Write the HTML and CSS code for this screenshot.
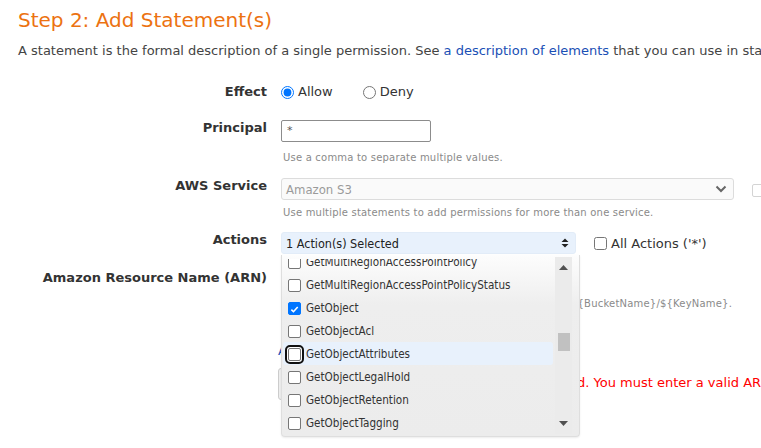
FILE: index.html
```html
<!DOCTYPE html>
<html>
<head>
<meta charset="utf-8">
<link rel="stylesheet" href="styles.css">
</head>
<body>
<div class="page">
  <h2 class="title">Step 2: Add Statement(s)</h2>
  <p class="intro">A statement is the formal description of a single permission. See <a href="#" class="link">a description of elements</a> that you can use in statements.</p>

  <div class="form">
    <div class="row row-effect">
      <div class="label">Effect</div>
      <div class="field radios">
        <label class="opt"><input type="radio" name="effect" checked> Allow</label>
        <label class="opt"><input type="radio" name="effect"> Deny</label>
      </div>
    </div>

    <div class="row row-principal">
      <div class="label">Principal</div>
      <div class="field">
        <div class="textbox">*</div>
        <div class="hint hint-principal">Use a comma to separate multiple values.</div>
      </div>
    </div>

    <div class="row row-service">
      <div class="label">AWS Service</div>
      <div class="field">
        <div class="service-line">
          <div class="select service-select">
            <span>Amazon S3</span>
            <svg class="chev" width="12" height="8" viewBox="0 0 12 8"><path d="M1.5 1.5 L6 6 L10.5 1.5" fill="none" stroke="#666" stroke-width="2"/></svg>
          </div>
          <span class="ghost-check"></span>
        </div>
        <div class="hint hint-service">Use multiple statements to add permissions for more than one service.</div>
      </div>
    </div>

    <div class="row row-actions">
      <div class="label">Actions</div>
      <div class="field actions-line">
        <div class="select actions-select">
          <span>1 Action(s) Selected</span>
          <svg class="updown" width="8" height="10" viewBox="0 0 8 10"><path d="M4 0.5 L7.5 4 H0.5 Z M4 9.5 L7.5 6 H0.5 Z" fill="#222"/></svg>
        </div>
        <label class="opt all"><input type="checkbox"> All Actions ('*')</label>
      </div>
    </div>

    <div class="row row-arn">
      <div class="label">Amazon Resource Name (ARN)</div>
      <div class="field">
        <div class="textbox arn-box"></div>
        <div class="hint hint-arn">ARN should follow the following format: arn:aws:s3:::${BucketName}/${KeyName}.</div>
        <div class="cond"><a href="#" class="link">Add Conditions (Optional)</a></div>
        <div class="submit-line">
          <button class="btn">Add Statement</button>
          <span class="error">Required field. You must enter a valid ARN.</span>
        </div>
      </div>
    </div>

    <div class="dropdown">
      <div class="dd-list">
        <div class="dd-items">
          <div class="item"><span class="cb"></span>GetMultiRegionAccessPointPolicy</div>
          <div class="item"><span class="cb"></span>GetMultiRegionAccessPointPolicyStatus</div>
          <div class="item"><span class="cb checked"><svg width="13" height="13" viewBox="0 0 13 13"><path d="M2.8 6.6 L5.3 9.1 L10.3 3.6" fill="none" stroke="#fff" stroke-width="1.9"/></svg></span>GetObject</div>
          <div class="item"><span class="cb"></span>GetObjectAcl</div>
          <div class="item hl"><span class="cb focus"></span>GetObjectAttributes</div>
          <div class="item"><span class="cb"></span>GetObjectLegalHold</div>
          <div class="item"><span class="cb"></span>GetObjectRetention</div>
          <div class="item"><span class="cb"></span>GetObjectTagging</div>
        </div>
      </div>
      <div class="scrollbar">
        <svg class="arr" width="9" height="5" viewBox="0 0 9 5"><path d="M4.5 0 L9 5 H0 Z" fill="#505050"/></svg>
        <div class="track"><div class="thumb"></div></div>
        <svg class="arr" width="9" height="5" viewBox="0 0 9 5"><path d="M0 0 H9 L4.5 5 Z" fill="#505050"/></svg>
      </div>
    </div>
  </div>
</div>
</body>
</html>
```

FILE: styles.css
```css
html, body {
  margin: 0;
  padding: 0;
  background: #fff;
}
body {
  font-family: "DejaVu Sans", Verdana, sans-serif;
  color: #333;
  width: 761px;
  height: 448px;
  overflow: hidden;
}
.page {
  padding-left: 18px;
  white-space: nowrap;
}
.title {
  margin: 8px 0 0 0;
  font-size: 20px;
  line-height: 24px;
  font-weight: normal;
  color: #ec7211;
}
.intro {
  margin: 11px 0 0 0;
  font-size: 13px;
  line-height: 16px;
  color: #444;
}
.link {
  color: #1a4fb5;
  text-decoration: none;
}
.form {
  position: relative;
  margin-left: -18px;
  padding-top: 1px;
}
.row {
  display: flex;
  align-items: flex-start;
  gap: 14px;
}
.label {
  width: 267px;
  flex: none;
  text-align: right;
  font-weight: bold;
  font-size: 13px;
  line-height: 16px;
  color: #333;
}
.field {
  font-size: 12px;
}
.row-effect { margin-top: 24px; }
.row-principal { margin-top: 20px; }
.row-service { margin-top: 14px; }
.row-actions { margin-top: 13px; }
.row-arn { margin-top: 16px; }

.radios {
  display: flex;
  gap: 30px;
  line-height: 16px;
  font-size: 13px;
  color: #333;
}
.opt {
  display: flex;
  align-items: center;
  gap: 4px;
}
.opt input {
  margin: 0;
  width: 13px;
  height: 13px;
}
.textbox {
  box-sizing: border-box;
  width: 150px;
  height: 22px;
  border: 1px solid #8c8c8c;
  border-radius: 2px;
  font-size: 11px;
  line-height: 20px;
  padding-left: 5px;
  color: #555;
}
.hint {
  font-size: 10px;
  line-height: 12px;
  letter-spacing: 0.2px;
  color: #8a8a8a;
  padding-left: 2px;
}
.hint-principal { margin-top: 10px; }
.hint-service { margin-top: 7px; }
.service-line {
  display: flex;
  align-items: center;
  gap: 18px;
}
.select {
  box-sizing: border-box;
  height: 22px;
  display: flex;
  align-items: center;
  justify-content: space-between;
  padding: 0 6px 0 4px;
  border-radius: 3px;
  font-family: "DejaVu Sans Condensed", "DejaVu Sans", sans-serif;
  font-size: 13px;
}
.service-select {
  width: 453px;
  border: 1px solid #dcdcdc;
  background: #fafafa;
  color: #9a9a9a;
}
.ghost-check {
  width: 13px;
  height: 13px;
  border: 1px solid #d4d4d4;
  border-radius: 2px;
  box-sizing: border-box;
  margin-top: 2px;
}
.actions-line {
  display: flex;
  align-items: center;
  gap: 18px;
}
.actions-select {
  width: 295px;
  background: #e8f1fc;
  border: 1px solid #e2ecf8;
  color: #222;
  font-size: 12.5px;
  padding-left: 4px;
}
.all {
  font-size: 13px;
  color: #333;
}
.arn-box { width: 290px; margin-top: -3px; border-color: #ccc; }
.hint-arn { margin-top: 9px; padding-left: 14px; }
.cond {
  margin-top: 33px;
  font-size: 13px;
  line-height: 16px;
  margin-left: -3px;
}
.submit-line {
  margin-top: 9px;
  display: flex;
  align-items: center;
  gap: 93px;
  margin-left: -3px;
}
.btn {
  height: 32px;
  padding: 0 16px;
  border: 1px solid #ccc;
  border-radius: 3px;
  background: #eee;
  font-family: inherit;
  font-size: 12px;
  color: #333;
}
.error {
  color: #f00;
  font-size: 13px;
  margin-top: -3px;
}

/* dropdown menu overlay */
.dropdown {
  position: absolute;
  left: 281px;
  top: 196px;
  width: 299px;
  height: 182px;
  box-sizing: border-box;
  border: 1px solid #dedede;
  border-top: none;
  border-radius: 0 0 4px 4px;
  background: linear-gradient(#fdfdfd 0, #f7f7f7 20px, #eeeeee 50px, #ececec 100%);
  box-shadow: 0 1px 2px rgba(0,0,0,0.08);
  display: flex;
  padding: 2px 7px 2px 1px;
  gap: 2px;
}
.dd-list {
  flex: 1;
  overflow: hidden;
  font-family: "DejaVu Sans Condensed", "DejaVu Sans", sans-serif;
  font-size: 11.6px;
  color: #333;
  margin-top: 2px;
}
.dd-items { margin-top: -9px; }
.item {
  height: 23px;
  display: flex;
  align-items: center;
  gap: 5px;
  padding-left: 5px;
  border-radius: 3px;
}
.item.hl { background: #e8f1fc; }
.cb {
  width: 13px;
  height: 13px;
  box-sizing: border-box;
  border: 1px solid #767676;
  border-radius: 2px;
  background: #fff;
  flex: none;
  display: flex;
  margin-top: 2px;
}
.cb.checked {
  background: #0075ff;
  border-color: #0075ff;
}
.cb.focus {
  outline: 2px solid #101010;
  outline-offset: 1px;
  box-shadow: 0 0 0 1px #fff;
}
.scrollbar {
  width: 17px;
  flex: none;
  background: #ebebeb;
  display: flex;
  flex-direction: column;
  align-items: center;
  padding: 8px 0 8px 0;
  box-sizing: border-box;
}
.track {
  flex: 1;
  width: 100%;
  padding-top: 63px;
}
.thumb {
  width: 12px;
  height: 18px;
  margin: 0 auto;
  background: #c1c1c1;
}
```
